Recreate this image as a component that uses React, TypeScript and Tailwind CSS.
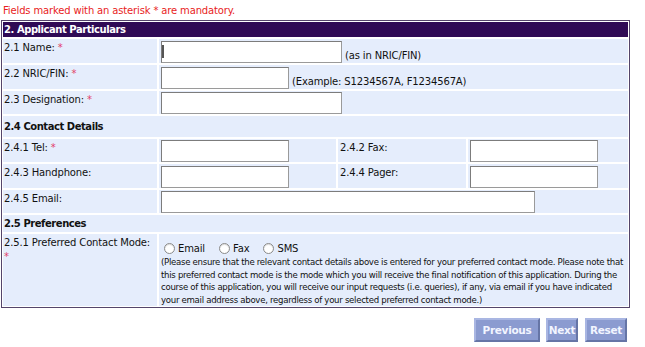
import React from 'react';

// Asterisk shown after mandatory labels
const Req: React.FC = () => <span className="text-[#e2406a]"> *</span>;

interface BoxProps {
  width: string;
  caret?: boolean;
}

const TextBox: React.FC<BoxProps> = ({ width, caret }) => (
  <div
    className={`relative h-[22px] ${width} bg-white border border-[#9a9a9a] border-t-[#7c7c7c] border-l-[#7c7c7c] shrink-0`}
  >
    {caret && <span className="absolute left-0 top-[3px] w-[2px] h-[13px] bg-[#555]" />}
  </div>
);

const cellBg = 'bg-[#e5edfc]';

interface RowProps {
  label: React.ReactNode;
  height: string;
  children?: React.ReactNode;
}

const FieldRow: React.FC<RowProps> = ({ label, height, children }) => (
  <div className={`flex gap-[2px] ${height}`}>
    <div className={`w-[154px] shrink-0 ${cellBg} pl-[1px] pt-[2px]`}>{label}</div>
    <div className={`flex-1 ${cellBg} pl-[2px] flex items-end`}>{children}</div>
  </div>
);

const SectionRow: React.FC<{ title: string; height: string }> = ({ title, height }) => (
  <div className={`${height} ${cellBg} pl-[1px] flex items-center font-bold tracking-[-0.45px]`}>{title}</div>
);

const Radio: React.FC<{ label: string; className?: string }> = ({ label, className }) => (
  <label className={`flex items-center ${className ?? ''}`}>
    <span className="w-[11px] h-[11px] rounded-full border border-[#8a8a8a] bg-white shadow-[inset_0_1px_1px_rgba(0,0,0,0.15)]" />
    <span className="ml-[3px] text-[10px]">{label}</span>
  </label>
);

const NavButton: React.FC<{ label: string; width: string; className?: string }> = ({ label, width, className }) => (
  <button
    type="button"
    className={`${width} h-[24px] ${className ?? ''} bg-[#8b9bd0] text-[#f2f5ff] font-bold text-[10.5px] tracking-[-0.3px] border-2 border-t-[#a9b6e2] border-l-[#a9b6e2] border-r-[#6675a6] border-b-[#6675a6]`}
  >
    {label}
  </button>
);

export default function App() {
  return (
    <div className="w-[645px] h-[347px] bg-white text-[#111] text-[10px] leading-[14px] tracking-[-0.15px] font-['DejaVu_Sans',sans-serif]">
      <div className="pl-[3px] pt-[3px] pb-[1px] h-[20px] leading-[16px] text-[10px] text-[#e81c22]">
        Fields marked with an asterisk * are mandatory.
      </div>

      <div className="ml-[1px] w-[629px] border border-[#54456a] p-[1px] flex flex-col gap-[2px] bg-white">
        <div className="h-[15px] bg-[#2f0a55] text-white font-bold tracking-[-0.45px] pl-[1px] flex items-center">
          2. Applicant Particulars
        </div>

        <FieldRow height="h-[24px]" label={<>2.1 Name:<Req /></>}>
          <TextBox width="w-[181px]" caret />
          <span className="ml-[3px]">(as in NRIC/FIN)</span>
        </FieldRow>
        <FieldRow height="h-[24px]" label={<>2.2 NRIC/FIN:<Req /></>}>
          <TextBox width="w-[128px]" />
          <span className="ml-[3px]">(Example: S1234567A, F1234567A)</span>
        </FieldRow>
        <FieldRow height="h-[23px]" label={<>2.3 Designation:<Req /></>}>
          <TextBox width="w-[181px]" />
        </FieldRow>

        <SectionRow title="2.4 Contact Details" height="h-[21px]" />

        <div className="flex gap-[2px] h-[23px]">
          <div className={`w-[154px] shrink-0 ${cellBg} pl-[1px] pt-[2px]`}>
            2.4.1 Tel:<Req />
          </div>
          <div className={`w-[177px] shrink-0 ${cellBg} pl-[2px] flex items-end`}>
            <TextBox width="w-[128px]" />
          </div>
          <div className={`w-[128px] shrink-0 ${cellBg} pl-[2px] pt-[2px]`}>2.4.2 Fax:</div>
          <div className={`flex-1 ${cellBg} pl-[2px] flex items-end`}>
            <TextBox width="w-[128px]" />
          </div>
        </div>

        <div className="flex gap-[2px] h-[24px]">
          <div className={`w-[154px] shrink-0 ${cellBg} pl-[1px] pt-[2px]`}>2.4.3 Handphone:</div>
          <div className={`w-[177px] shrink-0 ${cellBg} pl-[2px] flex items-end`}>
            <TextBox width="w-[128px]" />
          </div>
          <div className={`w-[128px] shrink-0 ${cellBg} pl-[2px] pt-[2px]`}>2.4.4 Pager:</div>
          <div className={`flex-1 ${cellBg} pl-[2px] flex items-end`}>
            <TextBox width="w-[128px]" />
          </div>
        </div>

        <FieldRow height="h-[23px]" label="2.4.5 Email:">
          <TextBox width="w-[374px]" />
        </FieldRow>

        <SectionRow title="2.5 Preferences" height="h-[17px]" />

        <div className="flex gap-[2px] h-[72px]">
          <div className={`w-[154px] shrink-0 ${cellBg} pl-[1px] pt-[2px]`}>
            2.5.1 Preferred Contact Mode:
            <br />
            <span className="text-[#e2406a]">*</span>
          </div>
          <div className={`flex-1 ${cellBg} pl-[2px] pt-[7px]`}>
            <div className="h-[15px] flex items-center pl-[3px]">
              <Radio label="Email" />
              <Radio label="Fax" className="ml-[14px]" />
              <Radio label="SMS" className="ml-[14px]" />
            </div>
            <div className="text-[8.6px] leading-[12.5px] whitespace-nowrap tracking-[-0.3px]">
              <div>(Please ensure that the relevant contact details above is entered for your preferred contact mode. Please note that</div>
              <div>this preferred contact mode is the mode which you will receive the final notification of this application. During the</div>
              <div>course of this application, you will receive our input requests (i.e. queries), if any, via email if you have indicated</div>
              <div>your email address above, regardless of your selected preferred contact mode.)</div>
            </div>
          </div>
        </div>
      </div>

      <div className="ml-[1px] w-[629px] mt-[10px] pr-[3px] flex justify-end">
        <NavButton label="Previous" width="w-[66px]" />
        <NavButton label="Next" width="w-[32px]" className="ml-[6px]" />
        <NavButton label="Reset" width="w-[42px]" className="ml-[7px]" />
      </div>
    </div>
  );
}
